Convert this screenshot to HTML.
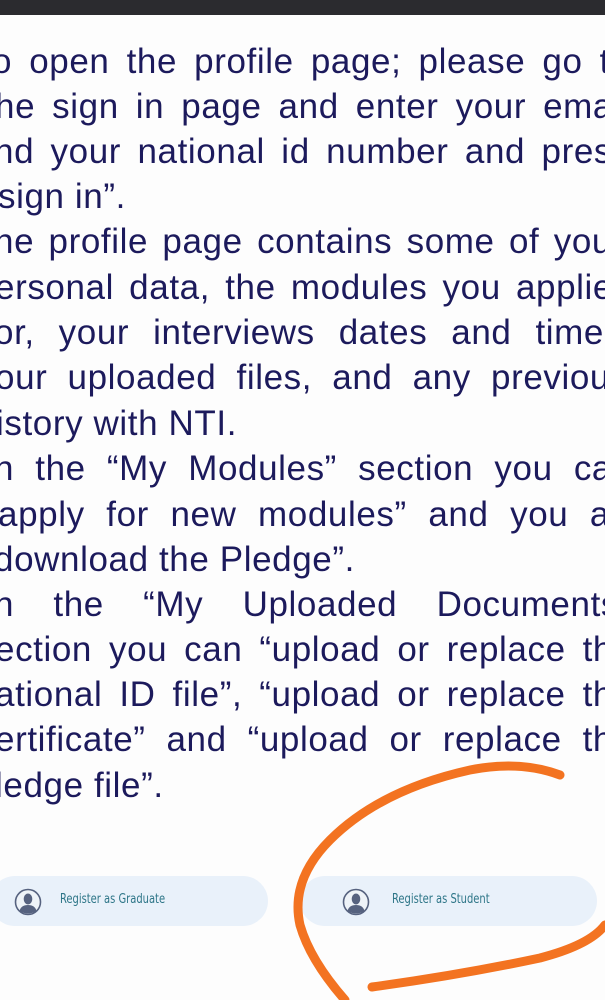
<!DOCTYPE html>
<html><head><meta charset="utf-8"><style>
html,body{margin:0;padding:0}
body{width:605px;height:1000px;overflow:hidden;position:relative;background:#fdfdfd;font-family:"Liberation Sans",Arial,sans-serif}
.bar{position:absolute;left:0;top:0;width:605px;height:15px;background:#2b2b2f}
.l{position:absolute;white-space:nowrap;font-size:35px;color:#1c1a5c;line-height:40px;letter-spacing:0.6px}
.j{width:618px;text-align:justify;text-align-last:justify}
.btn{position:absolute;top:876px;height:50px;border-radius:25px;background:#e9f1fa}
.btn span{position:absolute;top:16px;font-size:13px;color:#2e7688;font-family:"DejaVu Sans Condensed","Liberation Sans Narrow",sans-serif;transform:scaleX(.85);transform-origin:left}
.btn svg{position:absolute;top:12px}
</style></head><body>
<div class="bar"></div>
<div class="l j" style="left:-8px;top:42px">o open the profile page; please go t</div>
<div class="l j" style="left:-5px;top:87px">he sign in page and enter your ema</div>
<div class="l j" style="left:-6px;top:132px">nd your national id number and pres</div>
<div class="l" style="left:-2px;top:177px">sign in”.</div>
<div class="l j" style="left:-6px;top:222px">he profile page contains some of you</div>
<div class="l j" style="left:-5px;top:268px">ersonal data, the modules you applie</div>
<div class="l j" style="left:-6px;top:313px;width:610px">or, your interviews dates and time</div>
<div class="l j" style="left:-5px;top:358px;width:615px">our uploaded files, and any previou</div>
<div class="l" style="left:-4px;top:404px">istory with NTI.</div>
<div class="l j" style="left:-6px;top:449px;width:618px">n the “My Modules” section you ca</div>
<div class="l j" style="left:-2px;top:495px;width:612px">apply for new modules” and you a</div>
<div class="l" style="left:-6px;top:540px">download the Pledge”.</div>
<div class="l j" style="left:-6px;top:585px;width:625px">n the “My Uploaded Documents</div>
<div class="l j" style="left:-5px;top:630px;width:618px">ection you can “upload or replace th</div>
<div class="l j" style="left:-5px;top:675px;width:618px">ational ID file”, “upload or replace th</div>
<div class="l j" style="left:-5px;top:720px;width:618px">ertificate” and “upload or replace th</div>
<div class="l" style="left:-5px;top:766px">ledge file”.</div>
<div class="btn" style="left:-10px;width:278px">
<svg width="28" height="28" viewBox="0 0 28 28" style="left:24px"><circle cx="14" cy="14" r="12.5" fill="#eef3f8" stroke="#56627f" stroke-width="1.6"/><ellipse cx="14" cy="11" rx="4.3" ry="5.5" fill="#56627f"/><path d="M5.5 23 Q7 17 14 17 Q21 17 22.5 23 Q14 28 5.5 23Z" fill="#56627f"/></svg>
<span style="left:70px">Register as Graduate</span></div>
<div class="btn" style="left:300px;width:297px">
<svg width="28" height="28" viewBox="0 0 28 28" style="left:42px"><circle cx="14" cy="14" r="12.5" fill="#eef3f8" stroke="#56627f" stroke-width="1.6"/><ellipse cx="14" cy="11" rx="4.3" ry="5.5" fill="#56627f"/><path d="M5.5 23 Q7 17 14 17 Q21 17 22.5 23 Q14 28 5.5 23Z" fill="#56627f"/></svg>
<span style="left:92px">Register as Student</span></div>
<svg width="605" height="1000" style="position:absolute;left:0;top:0" viewBox="0 0 605 1000">
<path d="M560 775 Q520 760 470 770 Q380 790 330 840 Q290 880 300 925 Q310 960 345 1000" fill="none" stroke="#f37321" stroke-width="9" stroke-linecap="round"/>
<path d="M372 987 Q460 975 540 958 Q590 945 605 925" fill="none" stroke="#f37321" stroke-width="9" stroke-linecap="round"/>
</svg>
</body></html>
